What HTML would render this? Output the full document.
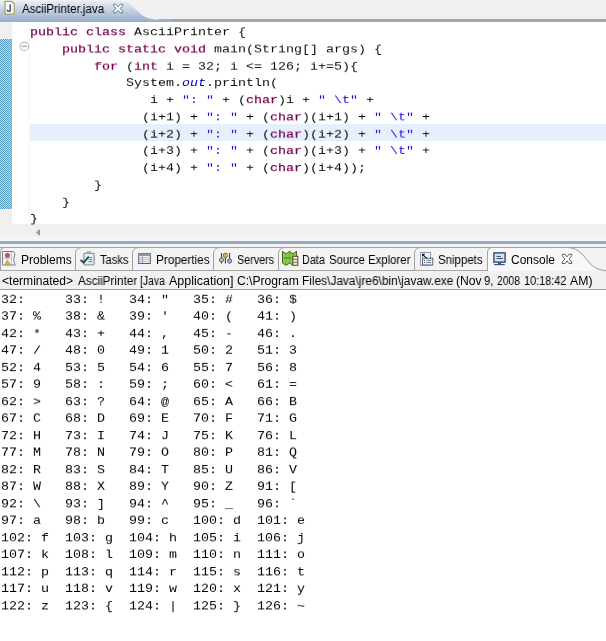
<!DOCTYPE html>
<html>
<head>
<meta charset="utf-8">
<title>AsciiPrinter</title>
<style>
html,body{margin:0;padding:0;}
body{width:606px;height:641px;position:relative;overflow:hidden;background:#fff;font-family:"Liberation Sans",sans-serif;}
.abs{position:absolute;}
.w{position:absolute;will-change:transform;font-family:"Liberation Sans",sans-serif;font-size:12px;line-height:14px;color:#000;white-space:pre;transform-origin:0 0;}
#topbar{left:0;top:0;width:606px;height:19px;background:#f0f0f0;}
#topline{left:0;top:19px;width:606px;height:2.7px;background:linear-gradient(#9aa4b0,#a4adb8);}
#ruler{left:0;top:22px;width:12px;height:220px;background:#f0f0f0;}
#rulermark{left:0;top:39px;width:12px;height:170px;background:repeating-conic-gradient(#5a9dc2 0 25%, #a6e6ea 0 50%) 0 0/2px 2px;}
#gutterline{left:29px;top:22px;width:1px;height:202px;background:#f5f5f5;}
#hl{left:30px;top:124px;width:576px;height:17px;background:#e6effc;}
.mono{margin:0;will-change:transform;font-family:"Liberation Mono",monospace;font-size:13.333px;line-height:19.767px;color:#0c0c0c;white-space:pre;transform:scaleY(0.86);transform-origin:0 0;}
#code{left:30px;top:23.7px;}
#code .kw{color:#780050;font-weight:normal;-webkit-text-stroke:0.25px #780050;}
#code .st{color:#2608e0;}
#code .fd{color:#0000b0;font-style:italic;}
#hscroll{left:12px;top:224px;width:594px;height:17px;background:#f0f0f0;}
#midgap{left:0;top:236px;width:606px;height:5px;background:#f1f3f8;}
#midline{left:0;top:241px;width:606px;height:3px;background:#9aaabe;}
#tabs{left:0;top:244px;width:606px;height:27px;background:#f3f3f3;}
#desc{left:0;top:271px;width:606px;height:19px;background:#f1f1f1;border-bottom:1px solid #9c9c9c;box-sizing:border-box;}
#console{left:0.5px;top:291.6px;tab-size:8;transform:scaleY(0.92);line-height:18.478px;color:#000;}
</style>
</head>
<body>
<div id="topbar" class="abs"></div>
<div id="topline" class="abs"></div>
<div id="ruler" class="abs"></div>
<div id="rulermark" class="abs"></div>
<div id="gutterline" class="abs"></div>
<div id="hl" class="abs"></div>
<div id="hscroll" class="abs"></div>
<div id="midgap" class="abs"></div>
<div id="midline" class="abs"></div>
<div id="tabs" class="abs"></div>
<div id="desc" class="abs"></div>
<svg class="abs" style="left:0;top:0" width="606" height="641" viewBox="0 0 606 641">
  <defs>
    <linearGradient id="tg" x1="0" y1="0" x2="0" y2="1">
      <stop offset="0" stop-color="#eef2f8"/>
      <stop offset="0.15" stop-color="#dfe6f0"/>
      <stop offset="1" stop-color="#98aecb"/>
    </linearGradient>
  </defs>
  <!-- editor tab -->
  <path d="M0 0 L122 0 C125 0 127 0.500 129 2.200 L141 13.500 C145 17 150 18.600 158 19.200 L172 19.500 L172 21.700 L0 21.700 Z" fill="url(#tg)"/>
  <path d="M122 0.300 C125 0.300 127 0.800 129 2.500 L141 13.800 C145 17.200 150 18.700 158 19.300" fill="none" stroke="#ffffff" stroke-opacity="0.7" stroke-width="1"/>
  <path d="M5 1.300 H11.500 L14.200 4 V14.200 H5 Z" fill="#fdfdf5" stroke="#a89a64" stroke-width="1.200"/>
  <path d="M10.300 4.500 V9.500 Q10.300 11.300 8.700 11.300 Q7.200 11.300 7.200 9.800" fill="none" stroke="#3c5a8c" stroke-width="1.600"/>
  <path d="M113.500 4.300 L116 4.300 L118.100 6.800 L120.200 4.300 L122.700 4.300 L122.700 5.700 L120.200 8.500 L122.700 11.300 L122.700 12.700 L120.200 12.700 L118.100 10.200 L116 12.700 L113.500 12.700 L113.500 11.300 L116 8.500 L113.500 5.700 Z" fill="#fff" stroke="#66768c" stroke-width="1"/>
  <!-- fold marker -->
  <circle cx="24.300" cy="46.400" r="4.300" fill="#fbfcfd" stroke="#bcc2c8" stroke-width="1.200"/>
  <path d="M21.800 46.400 H26.800" stroke="#98a0a8" stroke-width="1.200"/>
  <!-- scroll arrow -->
  <path d="M40 229 L36 232.500 L40 236 Z" fill="#969696"/>

  <!-- bottom tab folder -->
  <path d="M488 270.500 V253 Q488 247.500 493 247.500 H568 C580 248 584 257 590.600 264.200 C596 269 600 270 606 270.700 V271 H488 Z" fill="#f8f8f8"/>
  <path d="M0 247.500 H606" stroke="#a2a2a2" stroke-width="1" fill="none"/>
  <path d="M568 247.500 C580 248 584 257 590.600 264.200 C596 269 600 270 606 270.700" stroke="#9a9a9a" stroke-width="1" fill="none"/>
  <path d="M0.500 271 V252 Q0.500 248 4 247.500" stroke="#a2a2a2" stroke-width="1" fill="none"/>
  <path d="M0 270.500 H488" stroke="#a8a8a8" stroke-width="1" fill="none"/>
  <g fill="none" stroke="#a0a0a0" stroke-width="1">
    <path d="M75.500 270.500 V254 Q75.500 248.500 81 247.500"/>
    <path d="M132.500 270.500 V254 Q132.500 248.500 138 247.500"/>
    <path d="M213.500 270.500 V254 Q213.500 248.500 219 247.500"/>
    <path d="M278.500 270.500 V254 Q278.500 248.500 284 247.500"/>
    <path d="M414.500 270.500 V254 Q414.500 248.500 420 247.500"/>
    <path d="M487.500 270.500 V253 Q487.500 248 492 247.500"/>
  </g>
  <!-- Problems icon -->
  <g>
    <path d="M2.500 251.500 H13.500 Q15.500 253 14.500 256 Q13 259 14 262 L15.300 265 H2.500 Z" fill="#f6f8fb" stroke="#787c84" stroke-width="1"/>
    <path d="M2.500 258.400 H11.400 M11.400 252 V265" stroke="#a8b0bc" stroke-width="0.800" fill="none"/>
    <circle cx="7.400" cy="255.300" r="2.600" fill="#c8506c"/>
    <path d="M7.400 259.800 L10.300 264.600 H4.500 Z" fill="#d0b840" stroke="#a89030" stroke-width="0.500"/>
  </g>
  <!-- Tasks icon -->
  <g>
    <rect x="83.900" y="253.400" width="10.200" height="11.500" rx="0.800" fill="#e2f3f7" stroke="#a09a8c" stroke-width="1.300"/>
    <rect x="86.500" y="251.200" width="4.800" height="2.600" rx="0.800" fill="#a8a8c0"/>
    <path d="M80.600 259.800 L83.600 262.600 L88.800 256.600" fill="none" stroke="#1c4c5c" stroke-width="1.800"/>
    <path d="M89.300 257.500 H92.200 M88.800 259.600 H92.200 M88.300 261.700 H92.200" stroke="#507080" stroke-width="0.900"/>
  </g>
  <!-- Properties icon -->
  <g>
    <rect x="138.700" y="253.700" width="11.600" height="9.800" fill="#f4f6fa" stroke="#586070" stroke-width="1"/>
    <rect x="139.200" y="254.200" width="10.600" height="1.800" fill="#8890a8"/>
    <path d="M139 257.700 H150 M139 259.700 H150 M139 261.700 H150" stroke="#a0a8b8" stroke-width="0.700"/>
    <path d="M142.400 256 V263" stroke="#8890a4" stroke-width="0.800"/>
  </g>
  <!-- Servers icon -->
  <g>
    <path d="M221.500 253 V263.600 M225.400 253 V263.600 M229.600 253 V263.600" stroke="#344450" stroke-width="1.100"/>
    <circle cx="221.500" cy="259.900" r="2.100" fill="#b4c8a0" stroke="#4c6038" stroke-width="0.900"/>
    <circle cx="225.400" cy="255.400" r="2.200" fill="#d8b060" stroke="#806428" stroke-width="0.900"/>
    <circle cx="229.600" cy="260.900" r="2.100" fill="#a0b8d8" stroke="#485c80" stroke-width="0.900"/>
  </g>
  <!-- Data source icon -->
  <g>
    <path d="M282.500 251.300 L286 253.800 L289.500 251.300 L293 253.800 L296.500 251.300 V263 L293 265.300 L289.500 263 L286 265.300 L282.500 263 Z" fill="#8ed04c" stroke="#4c6020" stroke-width="1"/>
    <path d="M286 254 V265 M289.500 251.500 V263 M293 254 V265" stroke="#5ca434" stroke-width="0.900"/>
    <path d="M283.500 258 H292" stroke="#3c8c5c" stroke-width="1.600" opacity="0.700"/>
    <rect x="292.800" y="256.300" width="5" height="9" fill="#f2f2d4" stroke="#485030" stroke-width="1"/>
    <path d="M293 259.300 H297.600 M293 262.300 H297.600" stroke="#586040" stroke-width="0.900"/>
  </g>
  <!-- Snippets icon -->
  <g>
    <rect x="420.500" y="252.500" width="10" height="12.800" fill="#f2f5fa" stroke="#8c98ac" stroke-width="1"/>
    <rect x="422.500" y="258.200" width="10.300" height="6.800" fill="#e6eef8" stroke="#54647c" stroke-width="1"/>
    <path d="M426.500 260.400 H431 M426.500 262.500 H431" stroke="#6c7c94" stroke-width="0.900"/>
    <path d="M424 260.400 H425 M424 262.500 H425" stroke="#40506c" stroke-width="0.900"/>
    <path d="M426.800 258.400 L423 254.800" stroke="#181818" stroke-width="1.100" fill="none"/>
    <path d="M422 253.800 H425.300 L422 257 Z" fill="#181818"/>
  </g>
  <!-- Console icon -->
  <g>
    <rect x="493.900" y="252.900" width="11.200" height="9.200" fill="#d2e8f8" stroke="#3a5474" stroke-width="1.500"/>
    <path d="M496.500 256.400 H501 M496.500 258.500 H503" stroke="#2c3c50" stroke-width="0.900"/>
    <rect x="498" y="262.500" width="3" height="1.600" fill="#3a5474"/>
    <rect x="494.300" y="264" width="10.400" height="1.200" fill="#3a5474"/>
  </g>
  <!-- close X -->
  <path d="M562.300 254.300 L565 254.300 L567 256.900 L569 254.300 L571.700 254.300 L571.700 255.800 L569 258.900 L571.700 262 L571.700 263.500 L569 263.500 L567 260.900 L565 263.500 L562.300 263.500 L562.300 262 L565 258.900 L562.300 255.800 Z" fill="#fff" stroke="#54585c" stroke-width="1"/>
</svg>
<div class="tab"><span class="w" style="left:21.80px;top:1.5px;transform:scaleX(0.9614)">AsciiPrinter.java</span></div>
<pre id="code" class="abs mono"><span class="kw">public</span> <span class="kw">class</span> AsciiPrinter {
    <span class="kw">public</span> <span class="kw">static</span> <span class="kw">void</span> main(String[] args) {
        <span class="kw">for</span> (<span class="kw">int</span> i = 32; i &lt;= 126; i+=5){
            System.<span class="fd">out</span>.println(
               i + <span class="st">": "</span> + (<span class="kw">char</span>)i + <span class="st">" \t"</span> +
              (i+1) + <span class="st">": "</span> + (<span class="kw">char</span>)(i+1) + <span class="st">" \t"</span> +
              (i+2) + <span class="st">": "</span> + (<span class="kw">char</span>)(i+2) + <span class="st">" \t"</span> +
              (i+3) + <span class="st">": "</span> + (<span class="kw">char</span>)(i+3) + <span class="st">" \t"</span> +
              (i+4) + <span class="st">": "</span> + (<span class="kw">char</span>)(i+4));
        }
    }
}</pre>
<div class="tab"><span class="w" style="left:20.80px;top:252.5px;transform:scaleX(0.9990)">Problems</span></div>
<div class="tab"><span class="w" style="left:99.87px;top:252.5px;transform:scaleX(0.9233)">Tasks</span></div>
<div class="tab"><span class="w" style="left:155.72px;top:252.5px;transform:scaleX(0.9803)">Properties</span></div>
<div class="tab"><span class="w" style="left:237.25px;top:252.5px;transform:scaleX(0.8963)">Servers</span></div>
<div class="tab"><span class="w" style="left:302.10px;top:252.5px;transform:scaleX(0.9020)">Data</span> <span class="w" style="left:329.23px;top:252.5px;transform:scaleX(0.9459)">Source</span> <span class="w" style="left:368.05px;top:252.5px;transform:scaleX(0.9471)">Explorer</span></div>
<div class="tab"><span class="w" style="left:438.32px;top:252.5px;transform:scaleX(0.9552)">Snippets</span></div>
<div class="tab"><span class="w" style="left:511.20px;top:252.5px;transform:scaleX(0.9907)">Console</span></div>
<div id="desctext"><span class="w" style="left:2.00px;top:273.5px;transform:scaleX(1.0050)">&lt;terminated&gt;</span> <span class="w" style="left:77.60px;top:273.5px;transform:scaleX(0.9752)">AsciiPrinter</span> <span class="w" style="left:140.25px;top:273.5px;transform:scaleX(0.8679)">[Java</span> <span class="w" style="left:169.30px;top:273.5px;transform:scaleX(1.0400)">Application]</span> <span class="w" style="left:237.09px;top:273.5px;transform:scaleX(1.0100)">C:\Program</span> <span class="w" style="left:302.01px;top:273.5px;transform:scaleX(0.9904)">Files\Java\jre6\bin\javaw.exe</span> <span class="w" style="left:456.14px;top:273.5px;transform:scaleX(1.0122)">(Nov</span> <span class="w" style="left:484.04px;top:273.5px;transform:scaleX(0.9294)">9,</span> <span class="w" style="left:496.97px;top:273.5px;transform:scaleX(0.8621)">2008</span> <span class="w" style="left:523.59px;top:273.5px;transform:scaleX(0.9083)">10:18:42</span> <span class="w" style="left:569.60px;top:273.5px;transform:scaleX(1.0212)">AM)</span></div>
<pre id="console" class="abs mono">32:  	33: !	34: "	35: #	36: $
37: %	38: &amp;	39: '	40: (	41: )
42: *	43: +	44: ,	45: -	46: .
47: /	48: 0	49: 1	50: 2	51: 3
52: 4	53: 5	54: 6	55: 7	56: 8
57: 9	58: :	59: ;	60: &lt;	61: =
62: &gt;	63: ?	64: @	65: A	66: B
67: C	68: D	69: E	70: F	71: G
72: H	73: I	74: J	75: K	76: L
77: M	78: N	79: O	80: P	81: Q
82: R	83: S	84: T	85: U	86: V
87: W	88: X	89: Y	90: Z	91: [
92: \	93: ]	94: ^	95: _	96: `
97: a	98: b	99: c	100: d	101: e
102: f	103: g	104: h	105: i	106: j
107: k	108: l	109: m	110: n	111: o
112: p	113: q	114: r	115: s	116: t
117: u	118: v	119: w	120: x	121: y
122: z	123: {	124: |	125: }	126: ~
</pre>
</body>
</html>
